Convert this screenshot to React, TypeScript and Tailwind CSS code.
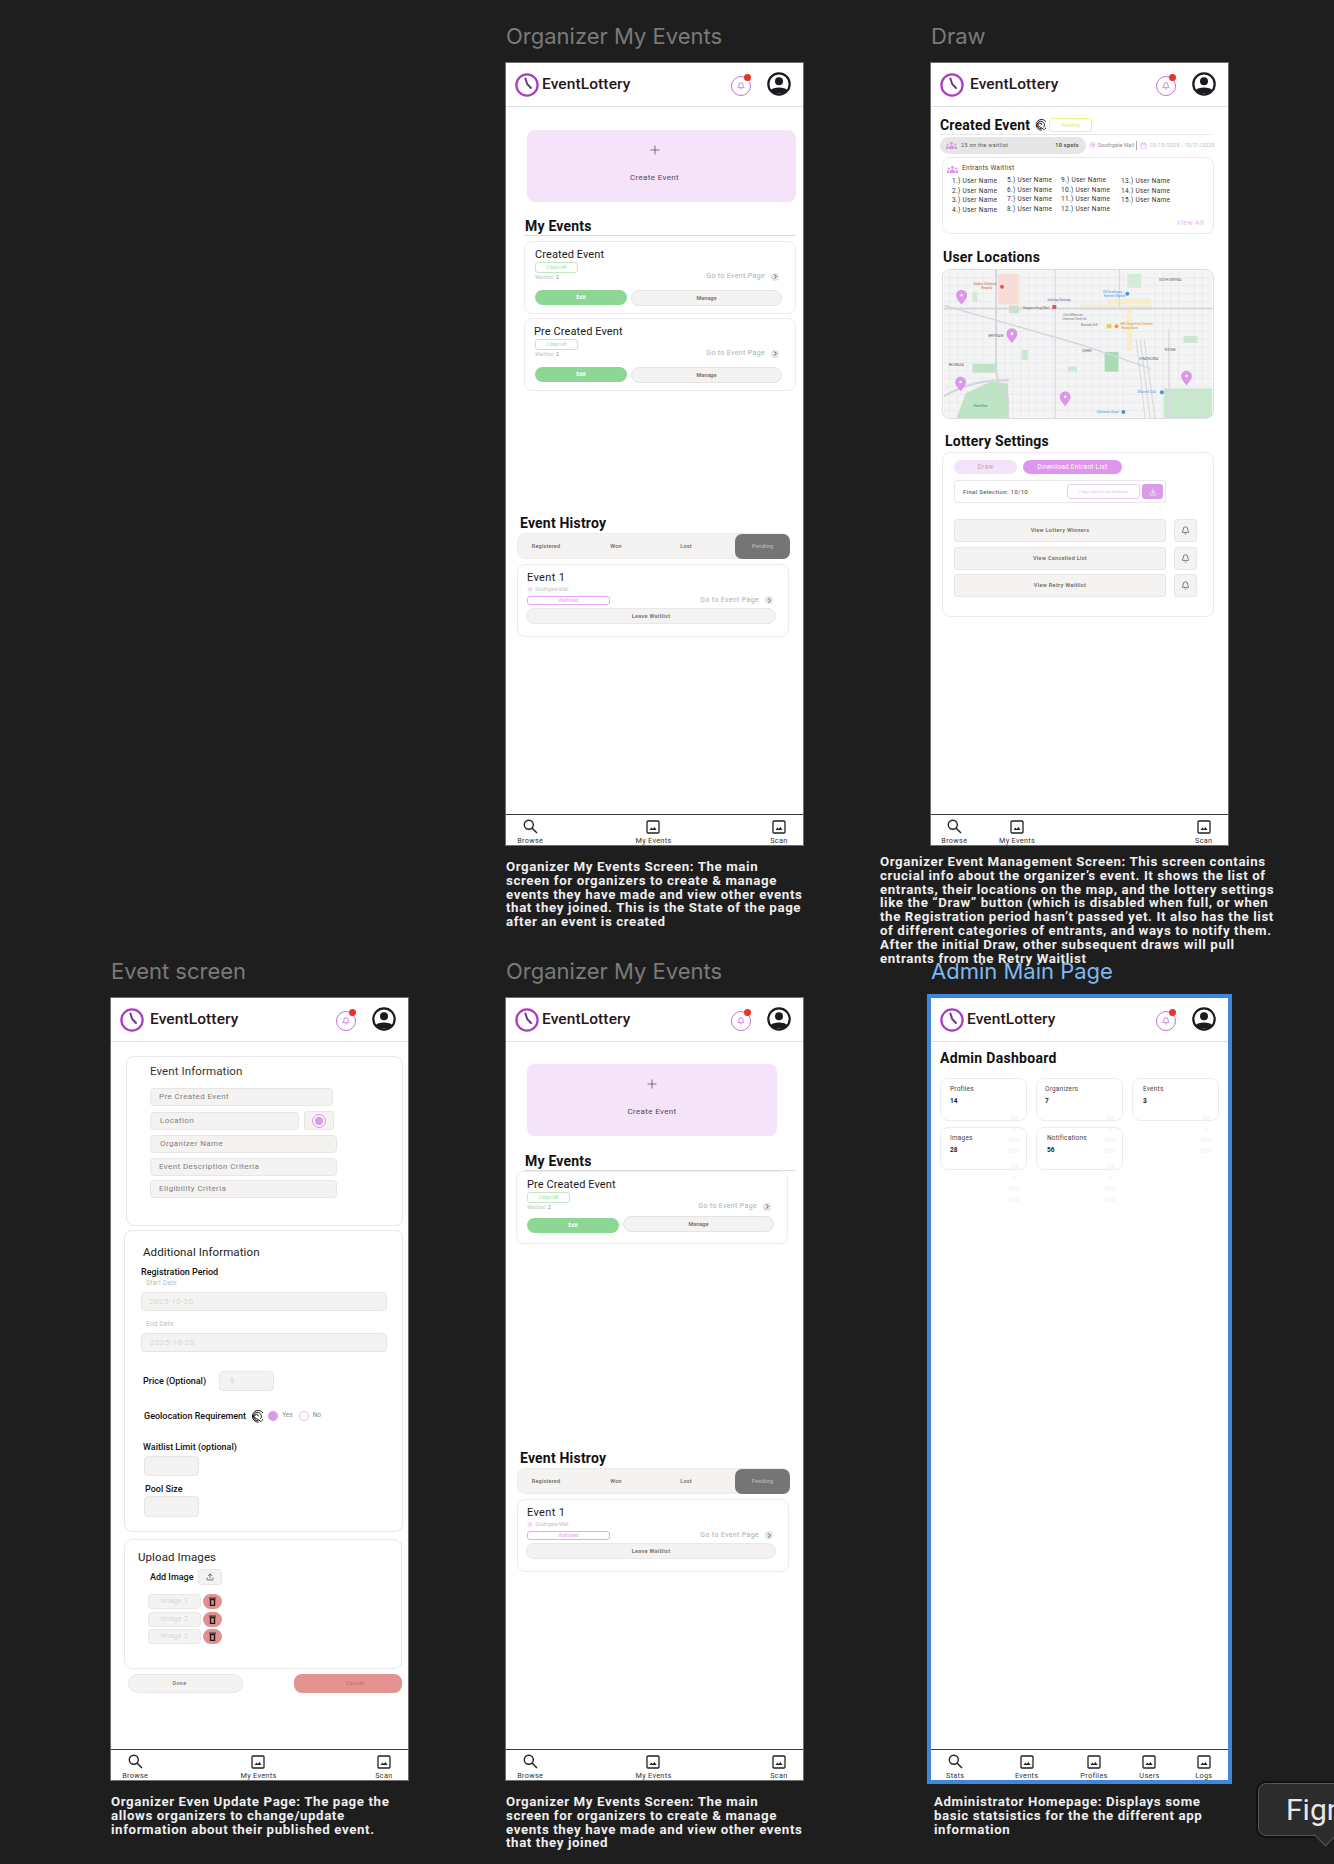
import React from 'react';
import { Bell, ChevronRight, MapPin, Plus, Upload, Calendar, Download } from 'lucide-react';

const ClockLogo = () => (
  <svg width="24" height="24" viewBox="0 0 24 24" fill="none" className="shrink-0">
    <circle cx="12" cy="12" r="10.6" stroke="#ab3fc0" strokeWidth="2.3" />
    <path d="M10.4 5.5 L12.2 11 L16 15" stroke="#6d3b86" strokeWidth="2" strokeLinecap="round" strokeLinejoin="round" />
  </svg>
);

const ProfileIcon = () => (
  <svg width="24" height="24" viewBox="0 0 24 24" className="shrink-0">
    <circle cx="12" cy="12" r="10.7" fill="#fff" stroke="#1a1a1f" strokeWidth="2.2" />
    <circle cx="12" cy="9.2" r="4" fill="#1a1a1f" />
    <path d="M3.6 18.4 C6 14.6 18 14.6 20.4 18.4 C18 22.6 6 22.6 3.6 18.4 Z" fill="#1a1a1f" />
  </svg>
);

const SearchIcon = () => (
  <svg width="15" height="15" viewBox="0 0 15 15" fill="none">
    <circle cx="5.8" cy="5.8" r="4.5" stroke="#222" strokeWidth="1.4" />
    <path d="M9 9 L14 14" stroke="#222" strokeWidth="1.5" />
  </svg>
);

const ImageIcon = () => (
  <svg width="14" height="14" viewBox="0 0 14 14" fill="none">
    <rect x="1" y="1" width="12" height="12" rx="1" stroke="#222" strokeWidth="1.3" />
    <path d="M3.5 10 L5.4 7.6 L6.8 9 L8.4 7 L10.6 10 Z" fill="#222" />
  </svg>
);

const FingerprintIcon = ({ size = 12 }: { size?: number }) => (
  <svg width={size} height={size} viewBox="0 0 12 12" fill="none" className="shrink-0" stroke="#111" strokeWidth="0.9">
    <path d="M11 10 A5.4 5.4 0 1 0 8 11.2" />
    <path d="M9.6 8.4 A3.7 3.7 0 1 0 7.4 9.6" />
    <path d="M7.8 6 A1.9 1.9 0 1 0 6 7.9 L10.6 11" />
  </svg>
);

const GroupIcon = () => (
  <svg width="11" height="7" viewBox="0 0 11 7" fill="#d893e6" className="shrink-0">
    <circle cx="5.5" cy="1.5" r="1.4" />
    <circle cx="1.7" cy="2.6" r="1" />
    <circle cx="9.3" cy="2.6" r="1" />
    <path d="M3 7 V5.4 Q3 3.6 5.5 3.6 Q8 3.6 8 5.4 V7 Z" />
    <path d="M0 7 V5.6 Q0 4.2 1.9 4.2 L2.4 4.4 V7 Z" />
    <path d="M11 7 V5.6 Q11 4.2 9.1 4.2 L8.6 4.4 V7 Z" />
  </svg>
);

const TrashIcon = () => (
  <svg width="7" height="9" viewBox="0 0 7 9" fill="#1a1a1a">
    <rect x="0" y="0.6" width="7" height="1" />
    <path d="M0.8 2 H6.2 V9 H0.8 Z M2.2 3.2 V7.8 H4.8 V3.2 Z" fillRule="evenodd" />
  </svg>
);

const Header = ({ textGap }: { textGap: string }) => (
  <div className="h-[44px] shrink-0 flex items-center pl-[9px] pr-[12px] border-b border-[#dedee4] bg-white">
    <ClockLogo />
    <span className={`${textGap} mt-[1px] text-[15.5px] font-medium text-[#2a1519] tracking-[0.1px]`}>EventLottery</span>
    <div className="ml-auto relative w-[20px] h-[20px] mt-[3px] rounded-full border border-[#c56fd6] flex items-center justify-center">
      <Bell size={8} className="text-[#b34fc8]" />
      <div className="absolute -top-[3px] -right-[1px] w-[7px] h-[7px] rounded-full bg-[#e9322b]" />
    </div>
    <div className="ml-[16px] -mt-[1px]">
      <ProfileIcon />
    </div>
  </div>
);

type NavDef = { label: string; search?: boolean; cls: string; drop?: boolean };

const NavBar = ({ items }: { items: NavDef[] }) => (
  <div className="h-[31px] mt-auto shrink-0 flex border-t border-[#3b3b3b] bg-white">
    {items.map((it) => (
      <div key={it.label} className={`${it.cls} flex flex-col items-center pt-[4px] ${it.drop ? 'mt-[1px]' : ''}`}>
        <div className="h-[16px] flex items-center">{it.search ? <SearchIcon /> : <ImageIcon />}</div>
        <span className="text-[7.3px] leading-[9px] mt-[2px] tracking-[0.3px] text-[#333] whitespace-nowrap">{it.label}</span>
      </div>
    ))}
  </div>
);

const EventCard = ({ title, titleMl, wrap, raised }: { title: string; titleMl?: string; wrap: string; raised?: boolean }) => (
  <div className={`${wrap} h-[73px] rounded-[8px] border border-[#ececec] bg-white pl-[10px] pt-[6px]`}>
    <div className={`${titleMl ?? ''} text-[11px] leading-[14px] tracking-[0.1px] text-[#1b1b1b]`}>{title}</div>
    <div className="w-[43px] h-[11px] rounded-[3px] border border-[#bfeac4] text-[4.5px] leading-[9px] text-center text-[#a5dcab]">2 days left</div>
    <div className="flex items-center h-[10px] pr-[16px]">
      <span className="text-[5px] text-[#bbb] tracking-[0.2px]">Waitlist: <span className="text-[#777]">2</span></span>
      <span className="ml-auto -mt-[3px] text-[7px] tracking-[0.35px] text-[#adadad]">Go to Event Page</span>
      <span className="ml-[6px] -mt-[3px] w-[8px] h-[8px] rounded-full bg-[#e4e4e4] flex items-center justify-center">
        <ChevronRight size={7} strokeWidth={3} className="text-[#444]" />
      </span>
    </div>
    <div className={`flex gap-[4px] items-start ${raised ? 'mt-[3px]' : 'mt-[7px]'}`}>
      <div className={`w-[92px] h-[15px] rounded-full bg-[#8dd694] text-[5.5px] font-bold leading-[15px] text-center text-white ${raised ? 'mt-[2px]' : ''}`}>Edit</div>
      <div className="w-[151px] h-[16px] rounded-full bg-[#f4f3f1] border border-[#e4e4e4] text-[5.5px] font-bold leading-[14px] text-center text-[#777]">Manage</div>
    </div>
  </div>
);

const EventHistory = () => (
  <div className="pl-[11px]">
    <div className="ml-[3px] text-[14px] leading-[18px] font-bold tracking-[0.2px] text-[#111]">Event Histroy</div>
    <div className="w-[273px] h-[26px] mt-[1px] rounded-[8px] bg-[#f4f3f1] border border-[#ececec] flex items-center text-[5.5px] font-medium text-[#666] tracking-[0.2px]">
      <span className="w-[56px] text-center">Registered</span>
      <span className="w-[84px] text-center">Won</span>
      <span className="w-[56px] text-center">Lost</span>
      <span className="ml-auto -mr-[1px] w-[55px] h-[25px] rounded-[7px] bg-[#757575] text-[#b5b5b5] flex items-center justify-center">Pending</span>
    </div>
    <div className="w-[272px] h-[73px] mt-[5px] rounded-[8px] border border-[#ececec] pl-[9px] pt-[6px]">
      <div className="text-[11px] leading-[14px] tracking-[0.35px] text-[#1b1b1b]">Event 1</div>
      <div className="flex items-center gap-[2px] h-[8px] mt-[1px] text-[5px] text-[#c2c2c2]">
        <MapPin size={6} className="text-[#e59cf0]" />Southgate Mall
      </div>
      <div className="flex items-center h-[10px] mt-[1px] pr-[15px]">
        <span className="w-[83px] h-[9px] rounded-[3px] border border-[#e7a6f2] text-[4.5px] leading-[7px] text-center text-[#e59cf0]">Waitlisted</span>
        <span className="ml-auto text-[7px] tracking-[0.35px] text-[#adadad]">Go to Event Page</span>
        <span className="ml-[6px] w-[8px] h-[8px] rounded-full bg-[#e4e4e4] flex items-center justify-center">
          <ChevronRight size={7} strokeWidth={3} className="text-[#444]" />
        </span>
      </div>
      <div className="w-[250px] h-[16px] mt-[3px] -ml-[1px] rounded-full bg-[#f4f3f1] border border-[#e8e8e8] text-[5.5px] font-bold leading-[14px] tracking-[0.3px] text-center text-[#777]">Leave Waitlist</div>
    </div>
  </div>
);

const basicNav: NavDef[] = [
  { label: 'Browse', search: true, cls: 'w-[50px]' },
  { label: 'My Events', cls: 'ml-[75px] w-[50px]' },
  { label: 'Scan', cls: 'ml-[77px] w-[50px]' },
];

const OrganizerFrame = ({ variant }: { variant: 'first' | 'second' }) => (
  <Phone>
    <Header textGap="ml-[3px]" />
    <div className="h-[407px] shrink-0">
      <div className={`${variant === 'first' ? 'w-[269px] pr-[14px] mt-[23px]' : 'w-[250px] mt-[22px]'} h-[72px] ml-[21px] rounded-[8px] bg-[#f5e3f9] flex flex-col items-center pt-[13px]`}>
        <Plus size={14} strokeWidth={1.3} className="text-[#5a4560]" />
        <span className="mt-[15px] text-[8px] tracking-[0.35px] text-[#55465a]">Create Event</span>
      </div>
      <div className={`ml-[19px] ${variant === 'first' ? 'mt-[15px]' : 'mt-[16px]'} text-[14px] leading-[18px] font-bold tracking-[0.2px] text-[#111]`}>My Events</div>
      <div className="ml-[18px] w-[272px] h-[1px] bg-[#dcdcdc]" />
      {variant === 'first' ? (
        <>
          <EventCard title="Created Event" wrap="ml-[18px] w-[272px] mt-[5px]" />
          <EventCard title="Pre Created Event" titleMl="-ml-[1px]" wrap="ml-[18px] w-[272px] mt-[4px]" />
        </>
      ) : (
        <EventCard title="Pre Created Event" wrap="ml-[10px] w-[272px]" raised />
      )}
    </div>
    <EventHistory />
    <NavBar items={basicNav} />
  </Phone>
);

const Phone = ({ children, accent }: { children: React.ReactNode; accent?: boolean }) => (
  <div
    className={`w-[297px] h-[782px] bg-white flex flex-col overflow-hidden ${
      accent ? 'outline-[4px] outline-solid outline-[#3f86dd]' : 'outline outline-[#6d6d6d]'
    }`}
  >
    {children}
  </div>
);

const MapView = () => {
  const vertical = [6, 14, 23, 31, 40, 62, 70, 78, 86, 94, 102, 110, 126, 134, 142, 150, 158, 166, 174, 182, 214, 222, 230, 238, 254, 262];
  const horizontal = [8, 16, 24, 32, 46, 54, 62, 70, 78, 86, 94, 102, 110, 118, 126, 134, 142];
  return (
    <svg viewBox="0 0 272 150" className="w-full h-full block">
      <rect width="272" height="150" fill="#f4f4f5" />
      {vertical.map((x) => (
        <line key={`v${x}`} x1={x} y1="0" x2={x} y2="150" stroke="#e6e7ea" strokeWidth="0.7" />
      ))}
      {horizontal.map((y) => (
        <line key={`h${y}`} x1="0" y1={y} x2="272" y2={y} stroke="#e6e7ea" strokeWidth="0.7" />
      ))}
      <rect x="55" y="4" width="21" height="31" fill="#f8dcd6" />
      <path d="M138 38 H211 M188 38 V82 M167 32 H210" stroke="#f8ecc9" strokeWidth="5" fill="none" />
      <rect x="163" y="83" width="14" height="20" fill="#a9dcb2" />
      <rect x="29" y="22" width="5" height="10" fill="#cfe9d3" />
      <rect x="66" y="36" width="10" height="8" fill="#c3e6ca" />
      <rect x="29" y="95" width="24" height="9" fill="#bfe3c5" />
      <rect x="79" y="81" width="6" height="10" fill="#c9e8cf" />
      <rect x="126" y="98" width="9" height="5" fill="#cbe9d1" />
      <rect x="243" y="67" width="14" height="7" fill="#cbe9d1" />
      <rect x="223" y="120" width="49" height="30" fill="#c8e7ce" />
      <rect x="186" y="4" width="14" height="14" fill="#d2ecd7" />
      <path d="M13 150 L22 125 L48 113 L65 115 L66 150 Z" fill="#bfe3c5" />
      <path d="M0 39 H272" stroke="#d3d7dd" strokeWidth="2" />
      <path d="M1 36 L53 51 L140 76 L210 100" stroke="#d3d7dd" strokeWidth="1.4" fill="none" />
      <path d="M53 0 V100 Q53 115 65 130 V150" stroke="#d3d7dd" strokeWidth="2" fill="none" />
      <path d="M113 0 V150 M228 60 V150 M178 0 V40" stroke="#d9dce1" strokeWidth="1.4" fill="none" />
      <path d="M0 128 Q30 110 66 112" stroke="#d3d8de" strokeWidth="2.4" fill="none" />
      <path d="M195 70 L204 150 M199 70 L209 150 M203 70 L214 150" stroke="#d3d6da" strokeWidth="1" />
      <g fontFamily="Roboto, sans-serif" fontSize="3">
        <text x="30" y="15" fill="#d2524a">Stollery Children's</text>
        <text x="38" y="19" fill="#d2524a">Hospital</text>
        <circle cx="59" cy="17" r="2" fill="#e0574e" />
        <text x="80" y="40" fill="#666">Shoppers Drug Mart</text>
        <rect x="110" y="35.5" width="4" height="4" fill="#e0505a" />
        <text x="105" y="31" fill="#666">Safeway Gateway</text>
        <text x="121" y="47" fill="#777">Cern Millenium</text>
        <text x="120" y="51" fill="#777">Chemical Tech Ltd</text>
        <text x="139" y="57" fill="#777">Bravado Grill</text>
        <rect x="165" y="55" width="5" height="4" fill="#f1cc42" />
        <circle cx="175" cy="57" r="2" fill="#ef9a3d" />
        <text x="179" y="56" fill="#d98a35">DRC Steak Fried Chicken</text>
        <text x="180" y="60" fill="#d98a35">Rotary Store</text>
        <text x="161" y="23" fill="#4a8fe7">Old Strathcona</text>
        <text x="162" y="27" fill="#4a8fe7">Farmers' Market</text>
        <circle cx="186" cy="24" r="2" fill="#4a8fe7" />
        <text x="196" y="125" fill="#4a8fe7">Millcreek Club</text>
        <circle cx="221" cy="124" r="2" fill="#4a8fe7" />
        <text x="155" y="145" fill="#4a8fe7">Dollarama Depot</text>
        <circle cx="182" cy="144" r="2" fill="#4a8fe7" />
        <text x="45" y="68" fill="#555">WHYTEAVE</text>
        <text x="140" y="83" fill="#555">QUEEN</text>
        <text x="198" y="91" fill="#555">STRATHCONA</text>
        <text x="5" y="97" fill="#555">BELGRAVIA</text>
        <text x="224" y="82" fill="#555">RITCHIE</text>
        <text x="218" y="11" fill="#555">SOUTH CENTRAL</text>
        <text x="30" y="139" fill="#3a8a58">Parks Rest</text>
      </g>
      {[[18, 28], [69, 67], [17, 116], [123, 131], [246, 110]].map(([x, y]) => (
        <g key={`${x}-${y}`}>
          <path
            d={`M${x} ${y + 7} C${x - 3} ${y + 3} ${x - 5.5} ${y + 1} ${x - 5.5} ${y - 2.5} A5.5 5.5 0 1 1 ${x + 5.5} ${y - 2.5} C${x + 5.5} ${y + 1} ${x + 3} ${y + 3} ${x} ${y + 7} Z`}
            fill="#dc96ea"
          />
          <circle cx={x} cy={y - 2.5} r="1.3" fill="#fff" />
        </g>
      ))}
    </svg>
  );
};

const waitlistColumns = [
  { cls: 'w-[55px] ml-[5px]', names: ['1.) User Name', '2.) User Name', '3.) User Name', '4.) User Name'] },
  { cls: 'w-[54px] -mt-[1px]', names: ['5.) User Name', '6.) User Name', '7.) User Name', '8.) User Name'] },
  { cls: 'w-[60px] -mt-[1px]', names: ['9.) User Name', '10.) User Name', '11.) User Name', '12.) User Name'] },
  { cls: 'w-[60px]', names: ['13.) User Name', '14.) User Name', '15.) User Name'] },
];

const ListRow = ({ label }: { label: string }) => (
  <div className="flex items-center">
    <div className="w-[212px] h-[23px] rounded-[3px] bg-[#f4f3f1] border border-[#e6e6e6] text-[5.5px] font-bold tracking-[0.3px] text-[#777] flex items-center justify-center">{label}</div>
    <div className="ml-[8px] w-[23px] h-[23px] rounded-[3px] bg-[#f4f3f1] border border-[#e6e6e6] flex items-center justify-center">
      <Bell size={9} className="text-[#555]" />
    </div>
  </div>
);

const DrawFrame = () => (
  <Phone>
    <Header textGap="ml-[6px]" />
    <div className="pl-[9px]">
      <div className="flex items-center h-[16px] mt-[10px] w-[272px]">
        <span className="text-[14px] font-bold tracking-[0.2px] text-[#111] whitespace-nowrap">Created Event</span>
        <span className="ml-[4px]"><FingerprintIcon /></span>
        <span className="ml-[3px] w-[43px] h-[14px] rounded-[3px] border border-[#f4f08a] text-[5px] leading-[12px] text-center text-[#e9e46a]">Pending</span>
      </div>
      <div className="w-[272px] h-[1px] mt-[1px] bg-[#e8e8e8]" />
      <div className="flex items-center mt-[2px] h-[17px] whitespace-nowrap">
        <div className="w-[146px] h-[17px] rounded-full bg-[#e6e6e6] flex items-center pl-[6px] pr-[7px] text-[5.5px] text-[#555] tracking-[0.3px]">
          <GroupIcon />
          <span className="ml-[4px]">25 on the waitlist</span>
          <span className="ml-auto font-bold">10 spots</span>
        </div>
        <MapPin size={7} className="ml-[3px] text-[#d893e6]" />
        <span className="ml-[2px] text-[5px] text-[#888] tracking-[0.2px]">Southgate Mall</span>
        <span className="ml-[2px] w-[1px] h-[9px] bg-[#aaa]" />
        <Calendar size={7} className="ml-[3px] text-[#e59cf0]" />
        <span className="ml-[2px] text-[5.5px] text-[#bbb] tracking-[0.1px]">10/15/2025 - 10/21/2025</span>
      </div>
      <div className="w-[272px] h-[77px] ml-[2px] mt-[3px] rounded-[8px] border border-[#ececec] pl-[4px] pt-[6px]">
        <div className="flex items-center gap-[4px] text-[6.5px] tracking-[0.3px] text-[#444] h-[10px]">
          <GroupIcon />Entrants Waitlist
        </div>
        <div className="flex mt-[3px] text-[6.5px] leading-[9.6px] tracking-[0.3px] text-[#333] whitespace-nowrap">
          {waitlistColumns.map((col) => (
            <div key={col.names[0]} className={col.cls}>
              {col.names.map((n) => (
                <div key={n}>{n}</div>
              ))}
            </div>
          ))}
        </div>
        <div className="text-right pr-[9px] mt-[3px] text-[7px] tracking-[0.3px] text-[#eab3f3]">View All</div>
      </div>
      <div className="ml-[3px] mt-[15px] text-[14px] leading-[16px] font-bold tracking-[0.2px] text-[#111]">User Locations</div>
      <div className="w-[272px] h-[150px] ml-[2px] mt-[4px] rounded-[8px] border border-[#dcdcdc] overflow-hidden">
        <MapView />
      </div>
      <div className="ml-[5px] mt-[14px] text-[14px] leading-[16px] font-bold tracking-[0.2px] text-[#111]">Lottery Settings</div>
      <div className="w-[272px] h-[165px] ml-[2px] mt-[3px] rounded-[8px] border border-[#ececec] pl-[11px] pt-[7px]">
        <div className="flex gap-[6px] text-[6.5px] tracking-[0.3px]">
          <span className="w-[63px] h-[14px] rounded-full bg-[#f5e3f9] text-[#b8a6bc] leading-[14px] text-center">Draw</span>
          <span className="w-[99px] h-[14px] rounded-full bg-[#de96ec] text-white leading-[14px] text-center">Download Entrant List</span>
        </div>
        <div className="w-[212px] h-[23px] mt-[6px] rounded-[3px] border border-[#e8e8e8] flex items-center pl-[8px] pr-[2px]">
          <span className="text-[6px] font-medium tracking-[0.3px] text-[#666]">Final Selection: 10/10</span>
          <span className="ml-auto w-[73px] h-[15px] rounded-[3px] border border-[#efc9f6] text-[4.2px] leading-[13px] text-center text-[#e8b4f1] whitespace-nowrap">2 days before confirmation</span>
          <span className="ml-[2px] w-[21px] h-[15px] rounded-[3px] bg-[#d99ae6] flex items-center justify-center">
            <Download size={8} className="text-white" />
          </span>
        </div>
        <div className="flex flex-col gap-[4.5px] mt-[16px]">
          <ListRow label="View Lottery Winners" />
          <ListRow label="View Cancelled List" />
          <ListRow label="View Retry Waitlist" />
        </div>
      </div>
    </div>
    <NavBar
      items={[
        { label: 'Browse', search: true, cls: '-ml-[1px] w-[50px]' },
        { label: 'My Events', cls: 'ml-[14px] w-[50px]' },
        { label: 'Scan', cls: 'ml-[138px] w-[50px]' },
      ]}
    />
  </Phone>
);

const Field = ({ text, cls, faint }: { text?: string; cls: string; faint?: boolean }) => (
  <div className={`${cls} rounded-[4px] bg-[#f4f3f1] border border-[#e6e6e6] flex items-center text-[8px] tracking-[0.4px] ${faint ? 'text-[#d6d6d6]' : 'text-[#808080]'}`}>{text}</div>
);

const Label = ({ text, cls }: { text: string; cls: string }) => (
  <div className={`${cls} text-[9px] leading-[11px] font-medium text-[#111] whitespace-nowrap`}>{text}</div>
);

const ImageRow = ({ text, cls }: { text: string; cls: string }) => (
  <div className={`${cls} flex items-center`}>
    <div className="w-[53px] h-[15px] rounded-[4px] bg-[#f4f3f1] border border-[#e8e8e8] text-[7px] text-[#d6d6d6] leading-[13px] text-center tracking-[0.3px]">{text}</div>
    <div className="ml-[2px] w-[19px] h-[15px] rounded-full bg-[#e2908d] flex items-center justify-center">
      <TrashIcon />
    </div>
  </div>
);

const EventFormFrame = () => (
  <Phone>
    <Header textGap="ml-[6px]" />
    <div className="pl-[13px]">
      <div className="ml-[2px] mt-[14px] w-[277px] h-[170px] rounded-[8px] border border-[#e6e6ec] pl-[23px] pt-[7px]">
        <div className="text-[11.5px] leading-[14px] tracking-[0.1px] text-[#333]">Event Information</div>
        <Field text="Pre Created Event" cls="w-[183px] h-[18px] mt-[10px] pl-[8px]" />
        <div className="flex items-center mt-[5px]">
          <Field text="Location" cls="w-[149px] h-[18px] pl-[9px]" />
          <div className="ml-[5px] w-[30px] h-[19px] rounded-[3px] bg-[#f4f3f1] border border-[#e6e6e6] flex items-center justify-center">
            <div className="w-[14px] h-[14px] rounded-full border border-[#d99ae6] flex items-center justify-center">
              <div className="w-[8px] h-[8px] rounded-full bg-[#d99ae6]" />
            </div>
          </div>
        </div>
        <Field text="Organizer Name" cls="w-[187px] h-[18px] mt-[5px] pl-[9px]" />
        <Field text="Event Description Criteria" cls="w-[187px] h-[18px] mt-[5px] pl-[8px]" />
        <Field text="Eligibility Criteria" cls="w-[187px] h-[18px] mt-[4px] pl-[8px]" />
      </div>
      <div className="mt-[4px] w-[279px] h-[302px] rounded-[8px] border border-[#e6e6ec] pl-[16px] pt-[14px]">
        <div className="ml-[2px] text-[11.5px] leading-[14px] tracking-[0.1px] text-[#222]">Additional Information</div>
        <Label text="Registration Period" cls="mt-[8px]" />
        <div className="ml-[5px] mt-[1px] text-[6.5px] leading-[9px] text-[#bdbdbd] tracking-[0.2px]">Start Date</div>
        <Field text="2025-10-20" faint cls="w-[246px] h-[19px] mt-[4px] pl-[7px]" />
        <div className="ml-[5px] mt-[9px] text-[6.5px] leading-[9px] text-[#bdbdbd] tracking-[0.2px]">End Date</div>
        <Field text="2025-10-20" faint cls="w-[246px] h-[19px] mt-[4px] pl-[8px]" />
        <div className="flex items-center mt-[19px] h-[20px]">
          <Label text="Price (Optional)" cls="ml-[2px] w-[76px]" />
          <Field text="$" faint cls="w-[55px] h-[20px] pl-[10px]" />
        </div>
        <div className="flex items-center mt-[19px] h-[12px]">
          <Label text="Geolocation Requirement" cls="ml-[3px]" />
          <span className="ml-[4px]"><FingerprintIcon size={13} /></span>
          <span className="ml-[5px] w-[10px] h-[10px] rounded-full bg-[#d99ae6]" />
          <span className="ml-[4px] text-[6.5px] text-[#888]">Yes</span>
          <span className="ml-[6px] w-[10px] h-[10px] rounded-full border border-[#e5b5ef]" />
          <span className="ml-[4px] text-[6.5px] text-[#888]">No</span>
        </div>
        <Label text="Waitlist Limit (optional)" cls="ml-[2px] mt-[20px]" />
        <Field cls="ml-[3px] w-[55px] h-[20px] mt-[3px]" />
        <Label text="Pool Size" cls="ml-[4px] mt-[8px]" />
        <Field cls="ml-[3px] w-[55px] h-[21px] mt-[1px]" />
      </div>
      <div className="mt-[7px] w-[278px] h-[130px] rounded-[8px] border border-[#e6e6ec] pl-[13px] pt-[10px]">
        <div className="text-[11.5px] leading-[14px] tracking-[0.1px] text-[#222]">Upload Images</div>
        <div className="flex items-center ml-[12px] mt-[5px] h-[16px]">
          <Label text="Add Image" cls="w-[48px]" />
          <div className="w-[24px] h-[16px] rounded-[3px] bg-[#f4f3f1] border border-[#e6e6e6] flex items-center justify-center">
            <Upload size={8} className="text-[#333]" />
          </div>
        </div>
        <ImageRow text="Image 1" cls="ml-[10px] mt-[9px]" />
        <ImageRow text="Image 2" cls="ml-[10px] mt-[3px]" />
        <ImageRow text="Image 2" cls="ml-[10px] mt-[2px]" />
      </div>
      <div className="flex items-center mt-[5px] ml-[4px] text-[5.5px] font-medium tracking-[0.3px]">
        <div className="w-[115px] h-[19px] pr-[12px] rounded-full bg-[#f4f3f1] border border-[#e6e6e6] text-[#777] text-center leading-[17px]">Done</div>
        <div className="ml-[51px] w-[108px] h-[19px] pl-[14px] rounded-[8px] bg-[#e59390] text-[#c9716f] text-center leading-[19px]">Cancel</div>
      </div>
    </div>
    <NavBar items={basicNav} />
  </Phone>
);

const StatCard = ({ label, value, pad }: { label: string; value: string; pad: string }) => (
  <div className="relative w-[87px] h-[43px] rounded-[8px] border border-[#ececec] pt-[6px] text-[#222]">
    <div className={`${pad} text-[6.5px] leading-[9px] tracking-[0.2px] text-[#444]`}>{label}</div>
    <div className={`${pad} mt-[3px] text-[6.5px] leading-[9px] font-bold`}>{value}</div>
    <div className="absolute left-[64px] top-[34px] w-[18px] text-[6.5px] leading-[11px] text-[#f1f1f1] text-center">
      <div>Joi</div>
      <div>n</div>
      <div>Wai</div>
      <div>tlist</div>
    </div>
  </div>
);

const AdminFrame = () => (
  <Phone accent>
    <Header textGap="ml-[3px]" />
    <div className="pl-[9px]">
      <div className="mt-[7px] text-[14px] leading-[18px] font-bold tracking-[0.3px] text-[#111]">Admin Dashboard</div>
      <div className="flex gap-[9px] mt-[11px]">
        <StatCard label="Profiles" value="14" pad="ml-[9px]" />
        <StatCard label="Organizers" value="7" pad="ml-[8px]" />
        <StatCard label="Events" value="3" pad="ml-[10px]" />
      </div>
      <div className="flex gap-[9px] mt-[6px]">
        <StatCard label="Images" value="28" pad="ml-[9px]" />
        <StatCard label="Notifications" value="56" pad="ml-[10px]" />
      </div>
    </div>
    <NavBar
      items={[
        { label: 'Stats', search: true, cls: 'w-[50px]' },
        { label: 'Events', cls: 'ml-[23px] w-[50px]' },
        { label: 'Profiles', cls: 'ml-[19px] w-[50px]', drop: true },
        { label: 'Users', cls: 'ml-[7px] w-[50px]' },
        { label: 'Logs', cls: 'ml-[6px] w-[50px]' },
      ]}
    />
  </Phone>
);

const Group = ({
  left,
  top,
  title,
  titleCls,
  caption,
  capCls,
  children,
}: {
  left: string;
  top: string;
  title: string;
  titleCls?: string;
  caption: string;
  capCls: string;
  children: React.ReactNode;
}) => (
  <div className={`absolute ${left} ${top} w-[297px]`}>
    <div className={`h-[34px] text-[22px] leading-[34px] whitespace-nowrap font-['Inter',sans-serif] ${titleCls ?? 'text-[#7a7a7a]'}`}>{title}</div>
    <div className="mt-[10px]">{children}</div>
    <div className={`${capCls} whitespace-pre-line text-[13.3px] leading-[13.8px] font-bold tracking-[0.6px] text-[#eeeeee]`}>{caption}</div>
  </div>
);

export default function App() {
  return (
    <div className="relative w-[1334px] h-[1864px] overflow-hidden bg-[#1e1e1e] font-['Roboto',sans-serif]">
      <Group
        left="left-[506px]"
        top="top-[19px]"
        title="Organizer My Events"
        capCls="mt-[15px] w-[320px]"
        caption={'Organizer My Events Screen: The main\nscreen for organizers to create & manage\nevents they have made and view other events\nthat they joined. This is the State of the page\nafter an event is created'}
      >
        <OrganizerFrame variant="first" />
      </Group>
      <Group
        left="left-[931px]"
        top="top-[19px]"
        title="Draw"
        capCls="mt-[10px] -ml-[51px] w-[410px]"
        caption={'Organizer Event Management Screen: This screen contains\ncrucial info about the organizer’s event. It shows the list of\nentrants, their locations on the map, and the lottery settings\nlike the “Draw” button (which is disabled when full, or when\nthe Registration period hasn’t passed yet. It also has the list\nof different categories of entrants, and ways to notify them.\nAfter the initial Draw, other subsequent draws will pull\nentrants from the Retry Waitlist'}
      >
        <DrawFrame />
      </Group>
      <Group
        left="left-[111px]"
        top="top-[954px]"
        title="Event screen"
        capCls="mt-[15px] w-[320px]"
        caption={'Organizer Even Update Page: The page the\nallows organizers to change/update\ninformation about their published event.'}
      >
        <EventFormFrame />
      </Group>
      <Group
        left="left-[506px]"
        top="top-[954px]"
        title="Organizer My Events"
        capCls="mt-[15px] w-[320px]"
        caption={'Organizer My Events Screen: The main\nscreen for organizers to create & manage\nevents they have made and view other events\nthat they joined'}
      >
        <OrganizerFrame variant="second" />
      </Group>
      <Group
        left="left-[931px]"
        top="top-[954px]"
        title="Admin Main Page"
        titleCls="text-[#7cb9f2]"
        capCls="mt-[15px] ml-[3px] w-[300px]"
        caption={'Administrator Homepage: Displays some\nbasic statsistics for the the different app\ninformation'}
      >
        <AdminFrame />
      </Group>
      <div className="absolute left-[1258px] top-[1783px] w-[120px] h-[53px] rounded-[8px] bg-[#2c2c2c] border border-[#555] shadow-[0_0_0_2px_#111] pl-[27px] text-[30px] leading-[51px] text-[#e8e8e8]">
        Figma
        <div className="absolute left-[58px] top-[42px] w-[17px] h-[17px] rotate-45 bg-[#2c2c2c] border-r border-b border-[#555]" />
      </div>
    </div>
  );
}
